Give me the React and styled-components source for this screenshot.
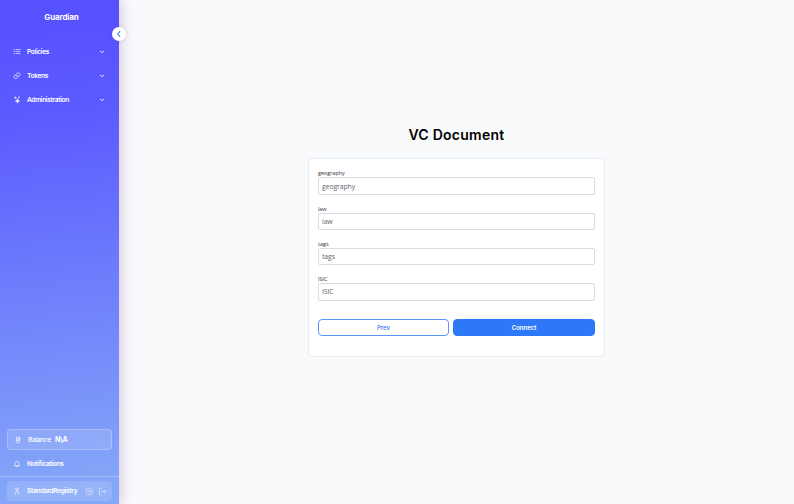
import React from 'react';
import styled, { createGlobalStyle } from 'styled-components';

const Global = createGlobalStyle`
  * { box-sizing: border-box; }
  html, body { margin: 0; height: 100%; }
  body { font-family: Inter, "Liberation Sans", sans-serif; background: #f9fafc; overflow: hidden; }
`;

const Page = styled.div`
  display: flex;
  width: 100%;
  height: 100vh;
`;

const Sidebar = styled.aside`
  position: relative;
  display: flex;
  flex-direction: column;
  flex: none;
  width: 119px;
  color: #fff;
  background: linear-gradient(174deg, #5650ff 3%, #5b5aff 22%, #84a7f8 96%);
  box-shadow: 1px 0 13px rgba(120, 50, 150, 0.3);
`;

const Brand = styled.div`
  margin-left: 4px;
  padding-top: 11px;
  height: 39px;
  text-align: center;
  font-size: 8px;
  line-height: 12px;
  font-weight: 700;
  letter-spacing: -0.14px;
`;

const Collapse = styled.button`
  position: absolute;
  left: 112px;
  top: 27px;
  display: grid;
  place-items: center;
  width: 14px;
  height: 14px;
  padding: 0;
  border: 0;
  border-radius: 50%;
  background: #fff;
  color: #2c78f6;
  box-shadow: 0 0 4px rgba(70, 40, 100, 0.16);
`;

const Nav = styled.nav`
  display: flex;
  flex-direction: column;
  flex: 1;
`;

const Item = styled.div`
  display: flex;
  align-items: center;
  flex: none;
  height: ${p => p.$height || 24}px;
  padding: 1px 13px 0 13px;
  font-size: 6.6px;
  line-height: 10px;
  font-weight: 600;
`;

const ItemLabel = styled.span`
  flex: 1;
  margin-left: 6px;
  letter-spacing: -0.33px;
  white-space: nowrap;
`;

const Balance = styled.div`
  display: flex;
  align-items: center;
  height: 21px;
  margin: 0 7px;
  padding-left: 6px;
  border: 1px solid rgba(255, 255, 255, 0.24);
  border-radius: 4px;
  background: rgba(255, 255, 255, 0.13);
  font-size: 6.6px;
  font-weight: 500;
`;

const BalanceLabel = styled.span`
  margin-left: 6px;
  width: 27px;
  letter-spacing: -0.34px;
`;

const Amount = styled.strong`
  font-size: 7px;
  font-weight: 700;
  letter-spacing: -0.3px;
`;

const Footer = styled.footer`
  height: 28px;
  padding: 4px 7px 3px;
  border-top: 1px solid rgba(255, 255, 255, 0.24);
`;

const User = styled.div`
  display: flex;
  align-items: center;
  height: 20px;
  padding: 0 5px 0 6px;
  border-radius: 4px;
  background: rgba(255, 255, 255, 0.14);
  font-size: 6.6px;
  font-weight: 600;
`;

const Actions = styled.div`
  display: flex;
  gap: 4px;
  opacity: 0.65;
`;

const Glyph = styled.svg`
  display: block;
  flex: none;
  width: ${p => p.$size || 8}px;
  height: ${p => p.$size || 8}px;
  fill: none;
  stroke: currentColor;
  stroke-width: ${p => p.$stroke || 0.7};
  stroke-linecap: round;
  stroke-linejoin: round;
  opacity: ${p => p.$alpha || 0.9};
`;

const Main = styled.main`
  display: flex;
  flex-direction: column;
  align-items: center;
  flex: 1;
  padding-top: 125px;
`;

const Title = styled.h1`
  margin: 0;
  height: 33px;
  color: #000;
  font-size: 14px;
  line-height: 20px;
  font-weight: 600;
  letter-spacing: 0.26px;
`;

const Card = styled.form`
  width: 297px;
  height: 199px;
  padding: 10.4px 9px 0;
  border: 1px solid #e7edf3;
  border-radius: 4px;
  background: #fff;
`;

const Field = styled.label`
  display: block;
  height: 35.2px;
  font-family: "Open Sans", "Noto Sans", sans-serif;
`;

const Caption = styled.span`
  display: block;
  height: 8px;
  color: #30343c;
  font-size: 5.5px;
  line-height: 8px;
  letter-spacing: -0.04px;
`;

const Input = styled.input`
  display: block;
  width: 277px;
  height: 17.6px;
  padding: 0 3px;
  border: 1px solid #d8dbe2;
  border-radius: 2px;
  outline: 0;
  background: #fff;
  font-family: inherit;
  font-size: 6.8px;
  letter-spacing: -0.06px;
  &::placeholder { color: #5f646d; opacity: 1; }
`;

const Buttons = styled.div`
  display: grid;
  grid-template-columns: 131px 142px;
  gap: 4px;
  margin-top: 8.6px;
`;

const Button = styled.button`
  height: 17px;
  padding: 1px 0 0;
  border: 1px solid ${p => p.$primary ? '#2c78f6' : '#5b95f7'};
  border-radius: 4px;
  background: ${p => p.$primary ? '#2c78f6' : '#fff'};
  color: ${p => p.$primary ? '#fff' : '#3b79f2'};
  font-family: Inter, sans-serif;
  font-size: 6.2px;
  line-height: 9px;
  font-weight: ${p => p.$primary ? 600 : 500};
  letter-spacing: ${p => p.$primary ? '-0.1px' : '-0.05px'};
`;

const shapes = {
  list: <path d="M1 1.5h.5M3 1.5h4M1 3.5h.5M3 3.5h4M1 5.5h.5M3 5.5h4" />,
  tokens: <><path d="M3.2 2.5 4.3 1h1.9l1 1.6-1 1.6H4.3z" /><path d="M2.6 3.2H1.7L.8 4.9l.9 1.7h2l.9-1.6" /></>,
  sparkle: <><path d="m4.5 2.9.6 1.4 1.5.7-1.5.6-.6 1.5-.6-1.5L2.4 5l1.5-.7z" fill="currentColor" /><path d="M2.3.9v1.7M1.5 1.7h1.6M5.9.9v1M5.4 1.4h1" /></>,
  balance: <><ellipse cx="4" cy="2.1" rx="1.7" ry="1.2" /><path d="M2.3 2.1v3.7c0 .7.8 1.2 1.7 1.2s1.7-.5 1.7-1.2V2.1M2.3 4.1c.6.8 2.8.8 3.4 0" /></>,
  bell: <path d="M1.3 5.8h5.4L6 5V3.3a2 2 0 0 0-4 0V5zM3.3 6.3c.2.8 1.2.8 1.4 0" />,
  user: <><circle cx="4" cy="2.4" r="1.4" /><path d="M2 7c0-1.6.8-2.3 2-2.3S6 5.4 6 7" /></>,
  settings: <><path d="M2.2 1.1h3.6l1 1v3.8l-1 1H2.2l-1-1V2.1z" /><circle cx="4" cy="4" r="1.3" /></>,
  logout: <path d="M3 1H1.3v6H3M3.2 4H7M5.5 2.5 7 4 5.5 5.5" />,
  down: <path d="m2.3 3.2 1.7 1.5 1.7-1.5" />,
  left: <path d="M4.8 1.7 2.7 4l2.1 2.3" />,
};

const Icon = ({ name, size, stroke, alpha }) => (
  <Glyph viewBox="0 0 8 8" $size={size} $stroke={stroke} $alpha={alpha} aria-hidden="true">{shapes[name]}</Glyph>
);

export default function App() {
  return (
    <>
      <Global />
      <Page>
        <Sidebar>
          <Brand>Guardian</Brand>
          <Collapse type="button" aria-label="Collapse sidebar"><Icon name="left" stroke={1.1} alpha={1} /></Collapse>
          <Nav>
            <Item><Icon name="list" /><ItemLabel>Policies</ItemLabel><Icon name="down" stroke={0.9} /></Item>
            <Item><Icon name="tokens" /><ItemLabel>Tokens</ItemLabel><Icon name="down" stroke={0.9} /></Item>
            <Item><Icon name="sparkle" /><ItemLabel>Administration</ItemLabel><Icon name="down" stroke={0.9} /></Item>
          </Nav>
          <Balance><Icon name="balance" /><BalanceLabel>Balance</BalanceLabel><Amount>N\A</Amount></Balance>
          <Item $height={26}><Icon name="bell" /><ItemLabel>Notifications</ItemLabel></Item>
          <Footer>
            <User>
              <Icon name="user" /><ItemLabel>StandardRegistry</ItemLabel>
              <Actions><Icon name="settings" size={9} /><Icon name="logout" size={9} /></Actions>
            </User>
          </Footer>
        </Sidebar>
        <Main>
          <Title>VC Document</Title>
          <Card onSubmit={event => event.preventDefault()}>
            {['geography', 'law', 'tags', 'ISIC'].map(name => (
              <Field key={name}><Caption>{name}</Caption><Input placeholder={name} /></Field>
            ))}
            <Buttons>
              <Button type="button">Prev</Button>
              <Button type="submit" $primary>Connect</Button>
            </Buttons>
          </Card>
        </Main>
      </Page>
    </>
  );
}
